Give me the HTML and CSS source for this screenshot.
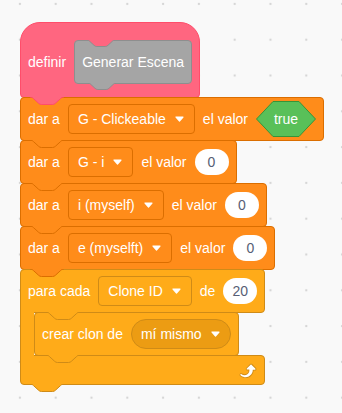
FILE: index.html
```html
<!DOCTYPE html>
<html lang="es">
<head>
  <meta charset="UTF-8">
  <title>definir Generar Escena</title>
  <link rel="stylesheet" href="styles.css">
</head>
<body>

  <svg class="defs">
    <symbol id="tab" viewBox="0 0 34 8">
      <path stroke="none" d="M0,0 C1.5,0 2.5,0.6 3.5,1.6 L8.5,6.2 C9.4,7 10.2,7.5 11.5,7.5 H22.5 C23.8,7.5 24.6,7 25.5,6.2 L30.5,1.6 C31.5,0.6 32.5,0 34,0 Z"/>
      <path fill="none" d="M0,0 C1.5,0 2.5,0.6 3.5,1.6 L8.5,6.2 C9.4,7 10.2,7.5 11.5,7.5 H22.5 C23.8,7.5 24.6,7 25.5,6.2 L30.5,1.6 C31.5,0.6 32.5,0 34,0"/>
    </symbol>
    <symbol id="tab-s" viewBox="0 0 28 7">
      <path stroke="none" d="M0,0 C1.2,0 2,0.6 2.8,1.4 L7,5.3 C7.8,6 8.6,6.5 9.8,6.5 H18.2 C19.4,6.5 20.2,6 21,5.3 L25.2,1.4 C26,0.6 26.8,0 28,0 Z"/>
      <path fill="none" d="M0,0 C1.2,0 2,0.6 2.8,1.4 L7,5.3 C7.8,6 8.6,6.5 9.8,6.5 H18.2 C19.4,6.5 20.2,6 21,5.3 L25.2,1.4 C26,0.6 26.8,0 28,0"/>
    </symbol>
    <symbol id="caret" viewBox="0 0 9 6">
      <path d="M1,1 H8 L4.5,5 Z"/>
    </symbol>
  </svg>

  <div class="workspace">
    <div class="script">

      <div class="block hat">
        <span>definir</span>
        <div class="proto">
          <svg class="notch"><use href="#tab-s"/></svg>
          Generar Escena
          <svg class="tab-s"><use href="#tab-s"/></svg>
        </div>
        <svg class="tab"><use href="#tab"/></svg>
      </div>

      <div class="block data">
        <span>dar a</span>
        <div class="menu">G - Clickeable <svg class="caret"><use href="#caret"/></svg></div>
        <span>el valor</span>
        <div class="bool">
          <svg viewBox="0 0 60 36"><polygon points="17,0.5 43,0.5 59.5,18 43,35.5 17,35.5 0.5,18"/></svg>
          <span>true</span>
        </div>
        <svg class="tab"><use href="#tab"/></svg>
      </div>

      <div class="block data">
        <span>dar a</span>
        <div class="menu">G - i <svg class="caret"><use href="#caret"/></svg></div>
        <span>el valor</span>
        <div class="num">0</div>
        <svg class="tab"><use href="#tab"/></svg>
      </div>

      <div class="block data">
        <span>dar a</span>
        <div class="menu">i (myself) <svg class="caret"><use href="#caret"/></svg></div>
        <span>el valor</span>
        <div class="num">0</div>
        <svg class="tab"><use href="#tab"/></svg>
      </div>

      <div class="block data">
        <span>dar a</span>
        <div class="menu">e (myselft) <svg class="caret"><use href="#caret"/></svg></div>
        <span>el valor</span>
        <div class="num">0</div>
        <svg class="tab"><use href="#tab"/></svg>
      </div>

      <div class="c-block">
        <div class="block control c-top">
          <span>para cada</span>
          <div class="menu">Clone ID <svg class="caret"><use href="#caret"/></svg></div>
          <span>de</span>
          <div class="num">20</div>
          <svg class="tab inner"><use href="#tab"/></svg>
        </div>
        <div class="c-mouth">
          <div class="c-arm"></div>
          <div class="block control">
            <span>crear clon de</span>
            <div class="menu round">mí mismo <svg class="caret"><use href="#caret"/></svg></div>
            <svg class="tab inner-own"><use href="#tab"/></svg>
          </div>
        </div>
        <div class="block control c-foot">
          <svg class="loop" viewBox="0 0 24 24">
            <path class="shade" d="M23.3,11c-0.3,0.6-0.9,1-1.5,1h-1.6c-0.1,1.3-0.5,2.5-1.1,3.6c-0.9,1.7-2.3,3.2-4.1,4.1c-1.7,0.9-3.6,1.2-5.5,0.9c-1.8-0.3-3.5-1.1-4.9-2.3c-0.7-0.7-0.7-1.9,0-2.6c0.6-0.6,1.6-0.7,2.3-0.2H7c0.9,0.6,1.9,0.9,2.9,0.9s1.9-0.3,2.7-0.9c1.1-0.8,1.8-2.1,1.8-3.5h-1.5c-0.9,0-1.7-0.7-1.7-1.7c0-0.4,0.2-0.9,0.5-1.2l4.4-4.4c0.7-0.6,1.7-0.6,2.4,0L22.9,9C23.4,9.5,23.5,10.3,23.3,11z"/>
            <path class="arrow" d="M21.8,11h-2.6c0,1.5-0.3,2.9-1,4.2c-0.8,1.6-2.1,2.8-3.7,3.6c-1.5,0.8-3.3,1.1-4.9,0.8c-1.6-0.2-3.2-1-4.4-2.1c-0.4-0.3-0.4-0.9-0.1-1.2c0.3-0.4,0.9-0.4,1.2-0.1l0,0c1,0.7,2.2,1.1,3.4,1.1s2.3-0.3,3.3-1c0.9-0.6,1.6-1.5,2-2.6c0.3-0.9,0.4-1.8,0.2-2.8h-2.4c-0.4,0-0.7-0.3-0.7-0.7c0-0.2,0.1-0.3,0.2-0.4l4.4-4.4c0.3-0.3,0.7-0.3,0.9,0L22,9.8c0.3,0.3,0.4,0.6,0.3,0.9S22,11,21.8,11z"/>
          </svg>
          <svg class="tab"><use href="#tab"/></svg>
        </div>
      </div>

    </div>
  </div>

</body>
</html>
```

FILE: styles.css
```css
body {
  margin: 0;
  height: 413px;
  font-family: "Liberation Sans", Arial, sans-serif;
  font-size: 14px;
  color: #fff;
  background-color: #f9f9f9;
  background-image: radial-gradient(circle, #d6d6d6 1px, transparent 1.6px);
  background-size: 35.8px 35.8px;
  background-position: 2px -14px;
}
.defs {
  position: absolute;
  width: 0;
  height: 0;
}
.workspace {
  padding: 22px 0 0 20px;
}
.script {
  display: flex;
  flex-direction: column;
  align-items: flex-start;
}
.script > * + * {
  margin-top: -1px;
}

/* blocks */
.block {
  position: relative;
  display: flex;
  align-items: center;
  gap: 8px;
  box-sizing: border-box;
  height: 44px;
  padding: 0 7px;
  border: 1px solid;
  border-radius: 4px;
  white-space: nowrap;
}
.hat {
  height: 76px;
  padding: 17px 7px 13px;
  border-radius: 20px 20px 4px 4px;
  background-color: #ff6680;
  border-color: #ff4d6a;
}
.data {
  background-color: #ff8c1a;
  border-color: #db6e00;
}
.control {
  background-color: #ffab19;
  border-color: #cf8b17;
}

/* connection tabs */
.tab {
  position: absolute;
  top: 100%;
  left: 9px;
  width: 34px;
  height: 8px;
  z-index: 2;
}
.hat > .tab {
  fill: #ff6680;
  stroke: #ff4d6a;
}
.data > .tab {
  fill: #ff8c1a;
  stroke: #db6e00;
}
.control > .tab {
  fill: #ffab19;
  stroke: #cf8b17;
}
.tab.inner {
  left: 25px;
}
.tab.inner-own {
  left: 11px;
}

/* procedure prototype */
.proto {
  position: relative;
  display: flex;
  align-items: center;
  box-sizing: border-box;
  height: 44px;
  padding: 0 7px;
  background-color: #a5a5a5;
  border: 1px solid #8e8e8e;
  border-radius: 4px;
}
.proto .notch,
.proto .tab-s {
  position: absolute;
  left: 12px;
  width: 28px;
  height: 7px;
  z-index: 2;
}
.proto .notch {
  top: -1px;
  fill: #ff6680;
  stroke: #8e8e8e;
}
.proto .tab-s {
  top: 100%;
  left: 13px;
  fill: #a5a5a5;
  stroke: #8e8e8e;
}

/* inputs */
.menu {
  display: flex;
  align-items: center;
  gap: 9px;
  box-sizing: border-box;
  height: 30px;
  padding: 0 10px 0 9px;
  border: 1px solid;
  border-radius: 4px;
}
.data .menu {
  border-color: #db6e00;
}
.control .menu {
  border-color: #cf8b17;
}
.menu.round {
  background-color: #ec9c13;
  border-radius: 15px;
}
.caret {
  width: 9px;
  height: 6px;
  fill: #fff;
  stroke: #fff;
  stroke-width: 1.2;
  stroke-linejoin: round;
}
.num {
  display: flex;
  align-items: center;
  justify-content: center;
  box-sizing: border-box;
  height: 26px;
  min-width: 34px;
  padding: 0 9px;
  border-radius: 13px;
  background-color: #fff;
  color: #575e75;
}
.bool {
  position: relative;
  display: flex;
  align-items: center;
  justify-content: center;
  width: 60px;
  height: 36px;
}
.bool svg {
  position: absolute;
  top: 0;
  left: 0;
  width: 60px;
  height: 36px;
}
.bool polygon {
  fill: #59c059;
  stroke: #389438;
}
.bool span {
  position: relative;
}

/* c block */
.c-block {
  display: flex;
  flex-direction: column;
  align-items: stretch;
}
.c-top {
  border-radius: 4px 4px 4px 0;
}
.c-mouth {
  display: flex;
  margin: -1px 0;
}
.c-arm {
  position: relative;
  z-index: 1;
  flex: none;
  box-sizing: border-box;
  width: 14px;
  background-color: #ffab19;
  border-left: 1px solid #cf8b17;
}
.c-mouth .block {
  flex: none;
}
.c-foot {
  height: 30px;
  justify-content: flex-end;
  border-radius: 0 4px 4px 4px;
}
.loop {
  width: 21px;
  height: 21px;
}
.loop .shade {
  fill: #cf8b17;
}
.loop .arrow {
  fill: #fff;
}
```
